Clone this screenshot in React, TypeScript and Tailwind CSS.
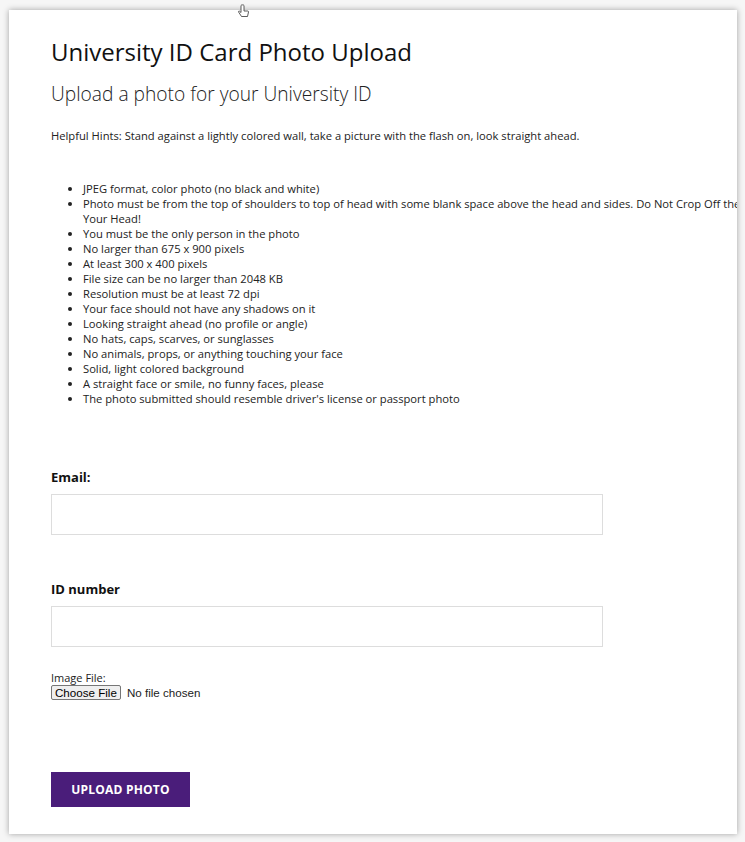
import React from "react";

const hints = [
  "JPEG format, color photo (no black and white)",
  "Photo must be from the top of shoulders to top of head with some blank space above the head and sides. Do Not Crop Off the Your Head!",
  "You must be the only person in the photo",
  "No larger than 675 x 900 pixels",
  "At least 300 x 400 pixels",
  "File size can be no larger than 2048 KB",
  "Resolution must be at least 72 dpi",
  "Your face should not have any shadows on it",
  "Looking straight ahead (no profile or angle)",
  "No hats, caps, scarves, or sunglasses",
  "No animals, props, or anything touching your face",
  "Solid, light colored background",
  "A straight face or smile, no funny faces, please",
  "The photo submitted should resemble driver's license or passport photo",
];

export default function App() {
  return (
    <div className="relative w-[745px] h-[842px] bg-[#f6f6f6] pt-[10px] pl-[9px] pr-[8px] font-['Open_Sans',sans-serif] text-[#222]">
      <svg
        className="absolute left-[238px] top-[4px] z-10"
        width="12"
        height="14"
        viewBox="0 0 12 14"
      >
        <path
          d="M3 1.5v7l-1.5-1.3c-.6-.4-1.3.2-.9.8L3.5 12.5h6l1-4.5c.1-.6-.3-1-.8-1H6V1.5c0-.8-3-.8-3 0z"
          fill="#fff"
          stroke="#333"
          strokeWidth="0.8"
        />
      </svg>
      <div className="h-[824px] bg-white shadow-[0_0_6px_rgba(0,0,0,0.35)] overflow-hidden pl-[42px] pt-[26px]">
        <div className="w-[760px]">
          <h1 className="text-[24px] leading-[32px] font-normal text-[#111]">
            University ID Card Photo Upload
          </h1>
          <h2 className="mt-[12px] text-[19.2px] leading-[28px] font-light text-[#222]">
            Upload a photo for your University ID
          </h2>
          <p className="mt-[20px] text-[11.2px] leading-[15px]">
            Helpful Hints: Stand against a lightly colored wall, take a picture
            with the flash on, look straight ahead.
          </p>
          <ul className="mt-[38px] pl-[32px] list-disc text-[11.2px] leading-[15px] w-[710px]">
            {hints.map((h) => (
              <li key={h}>{h}</li>
            ))}
          </ul>
          <form className="mt-[62px]">
            <label className="block text-[13px] leading-[18px] font-bold text-[#111]">
              Email:
            </label>
            <input
              type="email"
              className="mt-[8px] block w-[552px] h-[41px] border border-[#ddd] outline-none"
            />
            <label className="block mt-[45px] text-[13px] leading-[18px] font-bold text-[#111]">
              ID number
            </label>
            <input
              type="text"
              className="mt-[8px] block w-[552px] h-[41px] border border-[#ddd] outline-none"
            />
            <label className="block mt-[23px] text-[11px] leading-[15px]">
              Image File:
            </label>
            <input
              type="file"
              className="block text-[11.6px] leading-[14px] font-['Liberation_Sans',sans-serif] file:mr-[6px] file:px-[3px] file:py-0 file:h-[15px] file:border file:border-[#767676] file:rounded-[2px] file:bg-[#efefef] file:text-[#000]"
            />
            <button
              type="button"
              className="mt-[72px] block w-[139px] h-[35px] bg-[#4a1d7a] text-white text-[12px] font-bold uppercase tracking-[0.2px]"
            >
              Upload Photo
            </button>
          </form>
        </div>
      </div>
    </div>
  );
}
